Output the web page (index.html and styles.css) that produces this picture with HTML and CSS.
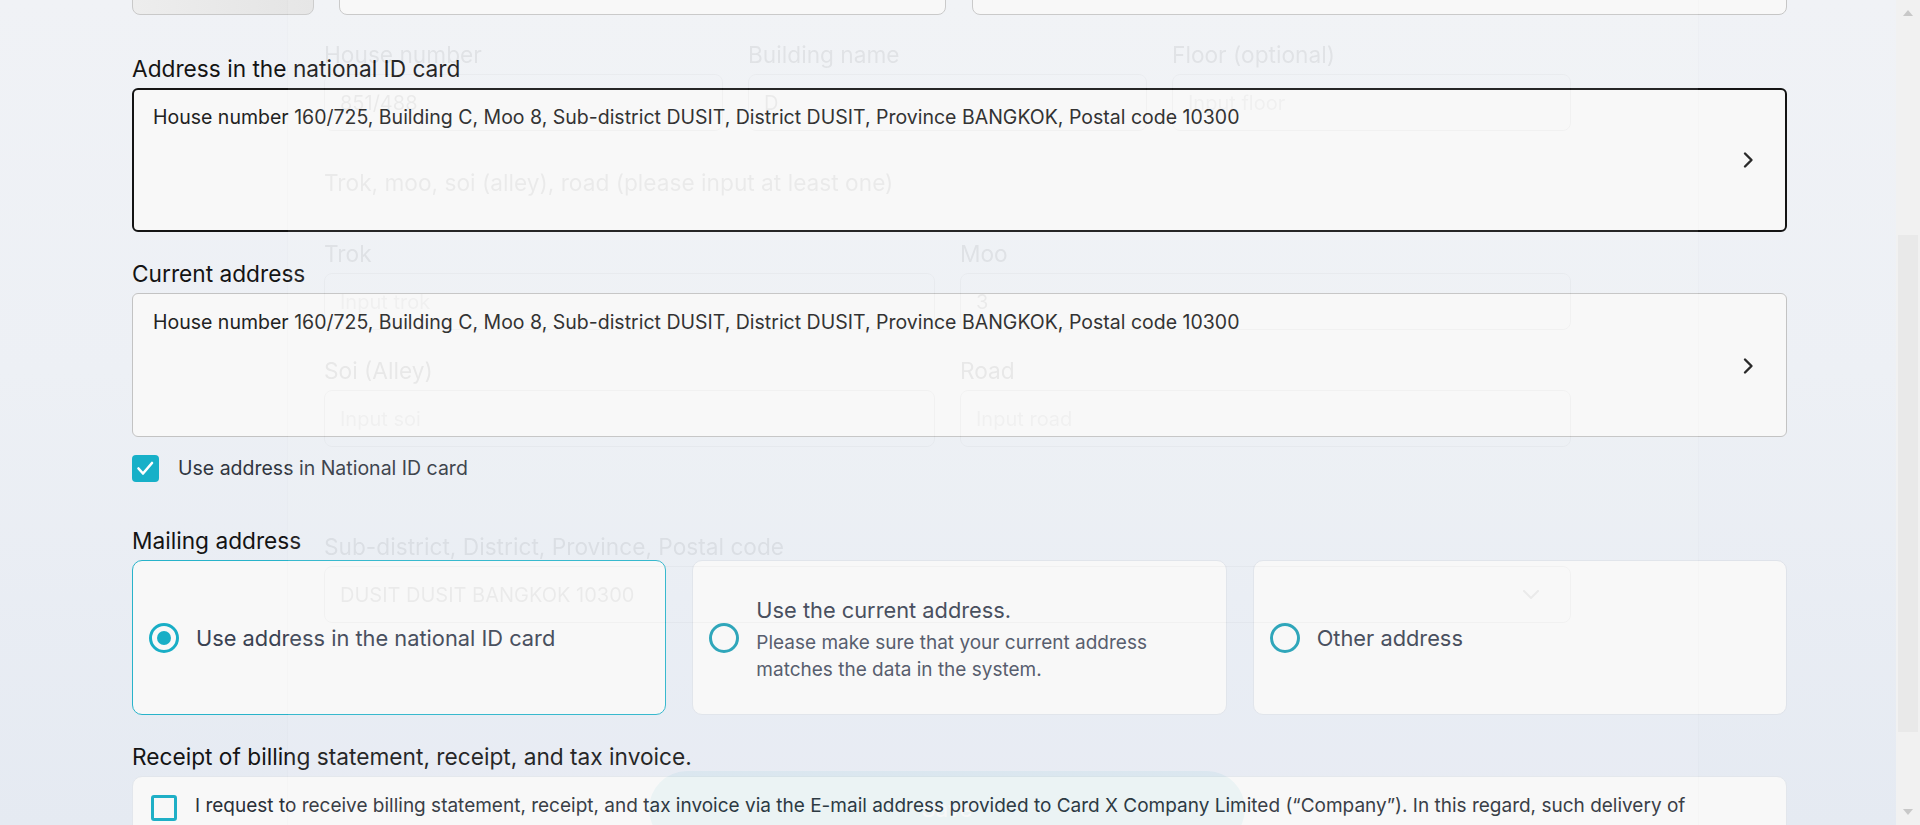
FILE: index.html
```html
<!DOCTYPE html>
<html lang="en">
<head>
<meta charset="utf-8">
<title>Address form</title>
<link rel="stylesheet" href="styles.css">
</head>
<body>
<div class="screen">
  <main class="page">
    <div class="content">
      <div class="top-row">
        <div class="top-btn"></div>
        <div class="top-input top-input-a"></div>
        <div class="top-input top-input-b"></div>
      </div>

      <section class="field field-first">
        <div class="label">Address in the national ID card</div>
        <div class="addr-box addr-box-active">
          <div class="addr-text">House number 160/725, Building C, Moo 8, Sub-district DUSIT, District DUSIT, Province BANGKOK, Postal code 10300</div>
          <svg class="chev" width="12" height="18" viewBox="0 0 12 18"><path d="M3 2.5l6.5 6.5-6.5 6.5" fill="none" stroke="#2a2a2a" stroke-width="2.4" stroke-linecap="round" stroke-linejoin="round"/></svg>
        </div>
      </section>

      <section class="field">
        <div class="label">Current address</div>
        <div class="addr-box">
          <div class="addr-text">House number 160/725, Building C, Moo 8, Sub-district DUSIT, District DUSIT, Province BANGKOK, Postal code 10300</div>
          <svg class="chev" width="12" height="18" viewBox="0 0 12 18"><path d="M3 2.5l6.5 6.5-6.5 6.5" fill="none" stroke="#2a2a2a" stroke-width="2.4" stroke-linecap="round" stroke-linejoin="round"/></svg>
        </div>
        <div class="check-row">
          <span class="checkbox checkbox-on"><svg width="27" height="27" viewBox="0 0 27 27"><path d="M6.5 13.5l4.5 5 9-10.5" fill="none" stroke="#fff" stroke-width="2.6" stroke-linecap="round" stroke-linejoin="round"/></svg></span>
          <span class="check-text">Use address in National ID card</span>
        </div>
      </section>

      <section class="field field-mail">
        <div class="label">Mailing address</div>
        <div class="cards">
          <div class="card card-selected">
            <span class="radio radio-on"></span>
            <div class="card-title">Use address in the national ID card</div>
          </div>
          <div class="card">
            <span class="radio"></span>
            <div class="card-body">
              <div class="card-title">Use the current address.</div>
              <div class="card-sub">Please make sure that your current address matches the data in the system.</div>
            </div>
          </div>
          <div class="card">
            <span class="radio"></span>
            <div class="card-title">Other address</div>
          </div>
        </div>
      </section>

      <section class="field">
        <div class="label label-receipt">Receipt of billing statement, receipt, and tax invoice.</div>
        <div class="consent">
          <span class="checkbox checkbox-off"></span>
          <p class="consent-text">I request to receive billing statement, receipt, and tax invoice via the E-mail address provided to Card X Company Limited (“Company”). In this regard, such delivery of billing statement, receipt, and tax invoice shall be deemed as delivered to me.</p>
        </div>
      </section>
    </div>

    <div class="ghost">
      <div class="ghost-card">
        <div class="g-grid3">
          <div class="g-field">
            <div class="g-label">House number</div>
            <div class="g-input g-value">851/488</div>
          </div>
          <div class="g-field">
            <div class="g-label">Building name</div>
            <div class="g-input g-value">D</div>
          </div>
          <div class="g-field">
            <div class="g-label">Floor (optional)</div>
            <div class="g-input g-ph">Input floor</div>
          </div>
        </div>
        <div class="g-title">Trok, moo, soi (alley), road (please input at least one)</div>
        <div class="g-grid2">
          <div class="g-field">
            <div class="g-label">Trok</div>
            <div class="g-input g-ph">Input trok</div>
          </div>
          <div class="g-field">
            <div class="g-label">Moo</div>
            <div class="g-input g-value">3</div>
          </div>
        </div>
        <div class="g-grid2 g-row3">
          <div class="g-field">
            <div class="g-label">Soi (Alley)</div>
            <div class="g-input g-ph">Input soi</div>
          </div>
          <div class="g-field">
            <div class="g-label">Road</div>
            <div class="g-input g-ph">Input road</div>
          </div>
        </div>
        <div class="g-field g-row4">
          <div class="g-label">Sub-district, District, Province, Postal code</div>
          <div class="g-input g-select">
            <span class="g-value">DUSIT DUSIT BANGKOK 10300</span>
            <svg width="18" height="12" viewBox="0 0 18 12"><path d="M2 2l7 7 7-7" fill="none" stroke="#555" stroke-width="2.2" stroke-linecap="round" stroke-linejoin="round"/></svg>
          </div>
        </div>
        <div class="g-btn-row"><div class="g-btn">Save</div></div>
      </div>
    </div>
  </main>

  <div class="scrollbar">
    <div class="sb-btn"><span class="tri tri-up"></span></div>
    <div class="sb-track"><div class="sb-thumb"></div></div>
    <div class="sb-btn"><span class="tri tri-down"></span></div>
  </div>
</div>
</body>
</html>
```

FILE: styles.css
```css
* { box-sizing: border-box; }

html, body {
  margin: 0;
  padding: 0;
  height: 100%;
  overflow: hidden;
}

body {
  font-family: Inter, "Noto Sans", sans-serif;
  color: #1a1a1a;
}

.screen {
  display: flex;
  height: 825px;
  overflow: hidden;
}

.page {
  flex: 1;
  position: relative;
  overflow: hidden;
  background: linear-gradient(180deg, #f0f2f6 0%, #edf0f5 45%, #e5eaf2 100%);
}

.content {
  margin-left: 132px;
  width: 1655px;
}

/* cut-off top row */
.top-row {
  display: flex;
  gap: 25px;
  height: 50px;
  margin-top: -35px;
}
.top-btn {
  width: 182px;
  border: 1px solid #c9c9c9;
  border-radius: 8px;
  background: linear-gradient(90deg, #ededed, #e4e4e4);
}
.top-input {
  border: 1px solid #c6c6c6;
  border-radius: 8px;
  background: #f8f8f8;
}
.top-input-a { width: 607px; }
.top-input-b { flex: 1; margin-left: 1px; }

/* fields */
.field { margin-top: 27px; }
.field-first { margin-top: 39px; }
.field-mail { margin-top: 44px; }

.label {
  font-size: 22.7px;
  line-height: 30px;
  color: #141414;
  margin-bottom: 4px;
}
.label-receipt { margin-bottom: 4px; }

.addr-box {
  display: flex;
  align-items: flex-start;
  height: 144px;
  border: 1px solid #c3c3c3;
  border-radius: 6px;
  background: #f8f8f8;
  padding: 14px 32px 0 20px;
}
.addr-box-active {
  border: 2px solid #141414;
  padding: 13px 31px 0 19px;
}
.addr-text {
  flex: 1;
  font-size: 19.5px;
  line-height: 28px;
  color: #222;
}
.chev {
  align-self: center;
  margin-top: -13px;
}

.check-row {
  display: flex;
  align-items: center;
  gap: 19px;
  margin-top: 18px;
}
.checkbox {
  display: block;
  flex: none;
  border-radius: 4px;
}
.checkbox-on {
  width: 27px;
  height: 27px;
  background: #17b0c8;
}
.checkbox-on svg { display: block; }
.check-text {
  font-size: 19.5px;
  line-height: 27px;
  color: #30363f;
}

/* mailing cards */
.cards {
  display: grid;
  grid-template-columns: repeat(3, 1fr);
  column-gap: 26px;
}
.card {
  display: flex;
  align-items: center;
  gap: 17px;
  height: 155px;
  padding: 0 16px;
  border: 1px solid #dfe3ea;
  border-radius: 10px;
  background: #f8f8f8;
}
.card-selected { border-color: #28b3ca; }
.radio {
  flex: none;
  width: 30px;
  height: 30px;
  border: 3px solid #1e9fb5;
  border-radius: 50%;
  display: flex;
  align-items: center;
  justify-content: center;
}
.radio-on { border-color: #19aec6; }
.radio-on::after {
  content: "";
  width: 14px;
  height: 14px;
  border-radius: 50%;
  background: #19aec6;
}
.card-title {
  font-size: 21.8px;
  line-height: 30px;
  color: #3a4252;
}
.card-body { padding-top: 2px; }
.card-sub {
  font-size: 19px;
  line-height: 27px;
  color: #4a5162;
  margin-top: 4px;
  max-width: 420px;
}

/* consent */
.consent {
  display: flex;
  align-items: flex-start;
  gap: 18px;
  height: 120px;
  padding: 13px 100px 0 18px;
  border: 1px solid #e2e6ec;
  border-radius: 10px;
  background: #f8f8f8;
}
.checkbox-off {
  width: 26px;
  height: 26px;
  margin-top: 5px;
  border: 3px solid #1fafc6;
  border-radius: 3px;
}
.consent-text {
  margin: 0;
  font-size: 19px;
  line-height: 32px;
  color: #2a2f37;
}

/* faded layer from the previous screen (lies over the content) */
.ghost {
  position: absolute;
  inset: 0;
  opacity: 0.08;
  pointer-events: none;
}
.ghost-card {
  position: absolute;
  left: 288px;
  top: -60px;
  width: 1410px;
  height: 1000px;
  padding: 100px 127px 0 36px;
  border-radius: 24px;
  background: #fff;
  box-shadow: 0 0 0 1px rgba(0, 0, 0, 0.15);
}
.g-grid3 {
  display: grid;
  grid-template-columns: repeat(3, 1fr);
  column-gap: 25px;
}
.g-grid2 {
  display: grid;
  grid-template-columns: repeat(2, 1fr);
  column-gap: 25px;
  margin-top: 41px;
}
.g-row3 { margin-top: 26px; }
.g-row4 { margin-top: 85px; }
.g-label {
  font-size: 22.7px;
  line-height: 30px;
  color: #333;
  margin-bottom: 4px;
}
.g-input {
  height: 57px;
  border: 1px solid #aaa;
  border-radius: 8px;
  background: #fff;
  padding: 0 15px;
  display: flex;
  align-items: center;
  font-size: 20px;
}
.g-value { color: #555; }
.g-ph { color: #999; }
.g-title {
  margin-top: 37px;
  font-size: 22.7px;
  line-height: 30px;
  color: #555;
}
.g-select { justify-content: space-between; padding-right: 30px; }
.g-btn-row {
  display: flex;
  margin-top: 148px;
  padding-left: 325px;
}
.g-btn {
  width: 596px;
  height: 76px;
  border-radius: 38px;
  background: #5cbccc;
  color: #fff;
  font-size: 22px;
  display: flex;
  align-items: center;
  justify-content: center;
}

/* scrollbar */
.scrollbar {
  flex: none;
  width: 24px;
  display: flex;
  flex-direction: column;
  background: #f1f1f1;
}
.sb-btn {
  height: 26px;
  display: flex;
  align-items: center;
  justify-content: center;
}
.tri {
  width: 0;
  height: 0;
  border-left: 5px solid transparent;
  border-right: 5px solid transparent;
}
.tri-up { border-bottom: 6px solid #c8c8c8; }
.tri-down { border-top: 6px solid #c8c8c8; }
.sb-track {
  flex: 1;
  padding-top: 209px;
}
.sb-thumb {
  height: 497px;
  margin: 0 2px;
  background: #e9e9e9;
}
```
